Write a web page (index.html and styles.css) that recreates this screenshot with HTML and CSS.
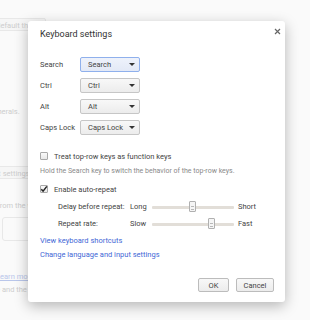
FILE: index.html
```html
<!DOCTYPE html>
<html lang="en">
<head>
  <meta charset="UTF-8">
  <title>Keyboard settings</title>
  <link rel="stylesheet" href="styles.css">
</head>
<body>

  <div class="page">
    <div class="page-btn top-btn">Reset to default theme</div>
    <p class="per">Add and configure peripherals.</p>
    <div class="page-btn lang-btn">Language and input settings</div>
    <p class="from">Download from the web</p>
    <div class="page-box"></div>
    <p class="page-link">Learn more</p>
    <p class="apps">Sync and the Apps</p>
  </div>

  <div class="dialog">
    <div class="dialog-head">
      <h1>Keyboard settings</h1>
      <svg class="close" width="7" height="7" viewBox="0 0 7 7">
        <path d="M1 1 L6 6 M6 1 L1 6" stroke="#666" stroke-width="1.2"/>
      </svg>
    </div>

    <div class="keys">
      <label>Search</label>
      <div class="select focused">Search<span class="arrow"></span></div>
      <label>Ctrl</label>
      <div class="select">Ctrl<span class="arrow"></span></div>
      <label>Alt</label>
      <div class="select">Alt<span class="arrow"></span></div>
      <label>Caps Lock</label>
      <div class="select">Caps Lock<span class="arrow"></span></div>
    </div>

    <div class="check-row first">
      <span class="box"></span>
      <span>Treat top-row keys as function keys</span>
    </div>
    <p class="hint">Hold the Search key to switch the behavior of the top-row keys.</p>

    <div class="check-row">
      <span class="box checked">
        <svg width="8" height="8" viewBox="0 0 8 8"><path d="M1.3 4.2 L3.1 6.2 L6.8 1.4" fill="none" stroke="#222" stroke-width="1.5"/></svg>
      </span>
      <span>Enable auto-repeat</span>
    </div>

    <div class="sliders">
      <span>Delay before repeat:</span>
      <span>Long</span>
      <div class="track"><span class="thumb" style="left: 37px"></span></div>
      <span>Short</span>
      <span>Repeat rate:</span>
      <span>Slow</span>
      <div class="track"><span class="thumb" style="left: 56px"></span></div>
      <span>Fast</span>
    </div>

    <a class="link first-link" href="#">View keyboard shortcuts</a>
    <a class="link" href="#">Change language and input settings</a>

    <div class="actions">
      <button>OK</button>
      <button>Cancel</button>
    </div>
  </div>

</body>
</html>
```

FILE: styles.css
```css
html, body {
  margin: 0;
  height: 100%;
}
body {
  font-family: Roboto, "Liberation Sans", sans-serif;
  background-color: #fafafa;
  position: relative;
  overflow: hidden;
  color: #333;
}
.page {
  font-size: 7.5px;
  color: #cdcdcd;
  white-space: nowrap;
}
.page p {
  margin: 0;
  line-height: 10px;
}
.page-btn {
  border: 1px solid #e8e8e8;
  border-radius: 2px;
  background: #f6f6f6;
  height: 13px;
  line-height: 13px;
  box-sizing: border-box;
}
.top-btn {
  margin-top: 18px;
  margin-left: -40px;
  width: 86px;
  padding-left: 6px;
}
.page .per {
  margin-top: 76px;
  margin-left: -82px;
}
.lang-btn {
  margin-top: 49px;
  margin-left: -72px;
  width: 140px;
  padding-left: 6px;
}
.page .from {
  margin-top: 22px;
  margin-left: -38px;
}
.page-box {
  margin-top: 6px;
  margin-left: 2px;
  height: 22px;
  width: 80px;
  border: 1px solid #e8e8e8;
  border-radius: 3px;
}
.page .page-link {
  margin-top: 31px;
  margin-left: -4px;
  color: #b9c6ea;
  text-decoration: underline;
}
.page .apps {
  margin-top: 3px;
  margin-left: -16px;
}

.dialog {
  position: absolute;
  left: 28px;
  top: 21px;
  width: 257px;
  height: 281px;
  box-sizing: border-box;
  padding: 7px 11px 0 12px;
  background: #fff;
  border-radius: 3px;
  box-shadow: 0 4px 14px rgba(0,0,0,0.28);
  font-size: 7.5px;
  color: #444;
}
.dialog-head {
  display: flex;
  justify-content: space-between;
  align-items: flex-start;
}
h1 {
  font-size: 9px;
  font-weight: normal;
  margin: 0;
  line-height: 12px;
  color: #333;
}
.close {
  margin-top: 0;
  margin-right: -7px;
}
.keys {
  display: grid;
  grid-template-columns: 40px 60px;
  row-gap: 6px;
  align-items: center;
  margin-top: 17px;
}
.select {
  position: relative;
  height: 15px;
  line-height: 13px;
  box-sizing: border-box;
  border: 1px solid #c6c6c6;
  border-radius: 2px;
  background: linear-gradient(#f8f8f8, #ececec);
  padding-left: 7px;
  color: #444;
}
.select.focused {
  border-color: #8fb0ec;
  background: linear-gradient(#eef2fb, #e3e9f6);
}
.arrow {
  position: absolute;
  right: 4px;
  top: 5px;
  border-left: 3px solid transparent;
  border-right: 3px solid transparent;
  border-top: 3px solid #333;
}
.check-row {
  display: flex;
  align-items: center;
  gap: 6px;
  height: 10px;
  margin-top: 8px;
}
.check-row.first {
  margin-top: 16px;
}
.box {
  width: 8px;
  height: 8px;
  box-sizing: border-box;
  border: 1px solid #a9a9a9;
  border-radius: 1px;
  background: linear-gradient(#fafafa, #e8e8e8);
  display: flex;
  align-items: center;
  justify-content: center;
}
.box svg {
  flex: none;
}
.hint {
  margin: 5px 0 0;
  font-size: 7px;
  line-height: 10px;
  color: #8a8a8a;
}
.sliders {
  display: grid;
  grid-template-columns: 72px 22px 82px auto;
  row-gap: 7px;
  align-items: center;
  margin-top: 8px;
  margin-left: 18px;
  line-height: 10px;
}
.sliders span:nth-child(4n) {
  padding-left: 4px;
}
.track {
  position: relative;
  height: 3px;
  background: #e2ded8;
  border-radius: 1px;
}
.thumb {
  position: absolute;
  top: -5px;
  width: 7px;
  height: 11px;
  box-sizing: border-box;
  border: 1px solid #b0b0b0;
  border-radius: 1px;
  background: repeating-linear-gradient(#f5f5f5 0 2px, #b8b8b8 2px 3px) 1px 2px / 3px 6px no-repeat, #f5f5f5;
}
.link {
  display: block;
  color: #3f68d6;
  text-decoration: none;
  line-height: 10px;
  margin-top: 4px;
}
.link.first-link {
  margin-top: 7px;
}
.actions {
  display: flex;
  justify-content: flex-end;
  gap: 7px;
  margin-top: 18px;
}
.actions button {
  height: 14px;
  padding: 0;
  font-family: inherit;
  font-size: 7.5px;
  color: #444;
  border: 1px solid #bcbcbc;
  border-radius: 2px;
  background: linear-gradient(#f8f8f8, #ececec);
}
.actions button:first-child {
  width: 31px;
}
.actions button:last-child {
  width: 38px;
}
```
